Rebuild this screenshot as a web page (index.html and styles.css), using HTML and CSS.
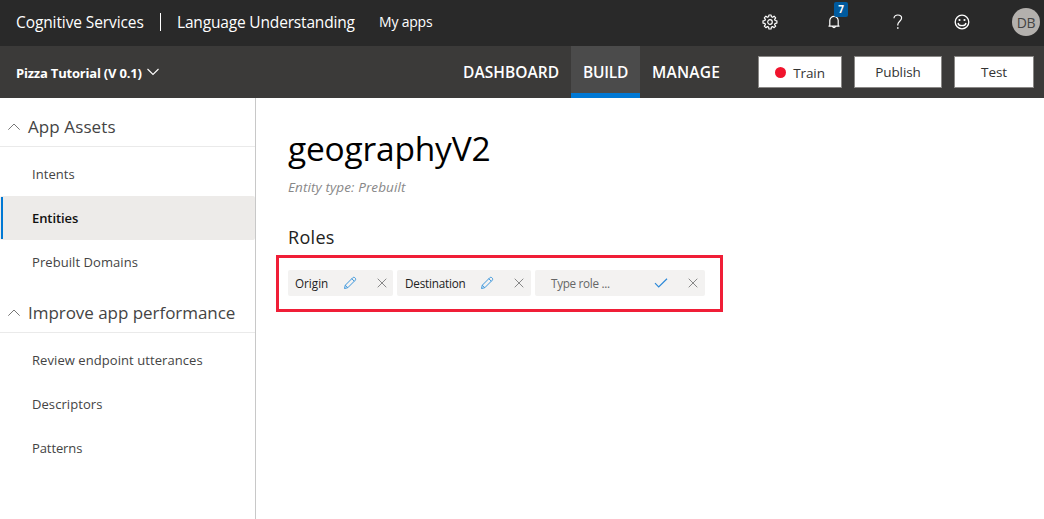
FILE: index.html
```html
<!DOCTYPE html>
<html lang="en">
<head>
<meta charset="utf-8">
<title>Language Understanding</title>
<link rel="stylesheet" href="styles.css">
</head>
<body>
<header class="topbar">
  <span class="brand">Cognitive Services</span>
  <span class="divider"></span>
  <span class="product">Language Understanding</span>
  <span class="my-apps">My apps</span>
  <div class="tools">
    <span class="tool"><svg width="16" height="16" viewBox="0 0 16 16" fill="none" stroke="#fff" stroke-width="1.2" stroke-linejoin="round"><path d="M6.900 1h2.200l.3 1.800 1.200.5 1.500-1.100 1.600 1.600-1.100 1.500.5 1.200 1.800.4v2.200l-1.800.3-.5 1.200 1.100 1.500-1.600 1.600-1.500-1.100-1.200.5L9.100 15H6.900l-.3-1.900-1.200-.5-1.500 1.100-1.600-1.600 1.100-1.500-.5-1.200L1 9.100V6.900l1.900-.4.5-1.200-1.100-1.500 1.600-1.600 1.500 1.100 1.200-.5z"/><circle cx="8" cy="8" r="2.300"/></svg></span>
    <span class="tool"><svg width="14" height="14" viewBox="0 0 14 14" fill="none" stroke="#fff" stroke-width="1.2"><path d="M2.800 10.700V5.600a4.200 4.200 0 0 1 8.400 0v5.100M1.500 11.200h11M5.600 11.600a1.500 1.500 0 0 0 2.800 0"/></svg><span class="badge">7</span></span>
    <span class="tool"><svg width="10" height="16" viewBox="0 0 10 16" fill="none" stroke="#fff" stroke-width="1.2"><path d="M1 4.200C1 2.200 2.700 1 4.800 1s3.800 1.200 3.800 3.100c0 2.900-3.800 3.400-3.800 6.500v.9"/><path d="M4.800 13.200v1.600" stroke-width="1.5"/></svg></span>
    <span class="tool"><svg width="16" height="16" viewBox="0 0 16 16" fill="none" stroke="#fff" stroke-width="1.3"><circle cx="8" cy="8" r="6.800"/><path d="M4 9c.8 3.600 7.200 3.600 8 0"/><circle cx="5.500" cy="6" r="1.100" fill="#fff" stroke="none"/><circle cx="10.500" cy="6" r="1.100" fill="#fff" stroke="none"/></svg></span>
    <span class="avatar">DB</span>
  </div>
</header>
<nav class="appbar">
  <span class="app-name">Pizza Tutorial (V 0.1)</span>
  <svg class="caret" width="12" height="8" viewBox="0 0 12 8" fill="none" stroke="#fff" stroke-width="1.1"><path d="M.5 1l5.500 5.500L11.500 1"/></svg>
  <div class="tabs">
    <a class="tab dashboard"><span>DASHBOARD</span></a>
    <a class="tab build active"><span>BUILD</span></a>
    <a class="tab manage"><span>MANAGE</span></a>
  </div>
  <div class="actions">
    <button class="btn train"><i class="dot"></i><span>Train</span></button>
    <button class="btn publish"><span>Publish</span></button>
    <button class="btn test"><span>Test</span></button>
  </div>
</nav>
<div class="body">
  <aside class="sidebar">
    <h2 class="group"><svg width="12" height="8" viewBox="0 0 12 8" fill="none" stroke="#777"><path d="M.3 6.700L6 1l5.700 5.700"/></svg><span class="assets">App Assets</span></h2>
    <ul class="links">
      <li><span>Intents</span></li>
      <li class="selected"><span>Entities</span></li>
      <li><span>Prebuilt Domains</span></li>
    </ul>
    <h2 class="group"><svg width="12" height="8" viewBox="0 0 12 8" fill="none" stroke="#777"><path d="M.3 6.700L6 1l5.700 5.700"/></svg><span class="improve">Improve app performance</span></h2>
    <ul class="links">
      <li><span>Review endpoint utterances</span></li>
      <li><span>Descriptors</span></li>
      <li><span class="patterns">Patterns</span></li>
    </ul>
  </aside>
  <main class="content">
    <h1 class="title"><span>geographyV2</span></h1>
    <p class="subtitle"><span>Entity type: Prebuilt</span></p>
    <h3 class="roles-heading"><span>Roles</span></h3>
    <div class="roles">
      <div class="chip origin"><span class="label">Origin</span><svg class="pencil" width="14" height="14" viewBox="0 0 14 14" fill="none" stroke="#3a96dd"><path d="M1.500 12.500l.8-3.300 7.400-7.400c1.500-1.500 4 .9 2.500 2.500L4.800 11.700zM8.800 2.700l2.500 2.500M2.300 9.200l2.500 2.500"/></svg><svg class="close" width="10" height="10" viewBox="0 0 10 10" stroke="#888"><path d="M.7.700l8.600 8.600M9.300.700L.7 9.300"/></svg></div>
      <div class="chip destination"><span class="label">Destination</span><svg class="pencil" width="14" height="14" viewBox="0 0 14 14" fill="none" stroke="#3a96dd"><path d="M1.500 12.500l.8-3.300 7.400-7.400c1.500-1.500 4 .9 2.500 2.500L4.800 11.700zM8.800 2.700l2.500 2.500M2.300 9.200l2.500 2.500"/></svg><svg class="close" width="10" height="10" viewBox="0 0 10 10" stroke="#888"><path d="M.7.700l8.600 8.600M9.300.700L.7 9.300"/></svg></div>
      <div class="chip entry"><span class="label">Type role ...</span><svg class="check" width="14" height="10" viewBox="0 0 14 10" fill="none" stroke="#2b88d8" stroke-width="1.2"><path d="M1 5.200l3.700 3.700L13 .7"/></svg><svg class="close" width="10" height="10" viewBox="0 0 10 10" stroke="#888"><path d="M.7.700l8.600 8.600M9.300.700L.7 9.300"/></svg></div>
    </div>
  </main>
</div>
</body>
</html>
```
FILE: styles.css
```css
* { box-sizing: border-box; }
body { margin: 0; width: 1044px; height: 519px; overflow: hidden; background: #fff; font-family: "Open Sans", "Noto Sans", sans-serif; color: #444; }
h1, h2, h3, p, ul { margin: 0; padding: 0; font-weight: 400; list-style: none; }
span { white-space: nowrap; }
svg { display: block; flex: none; }

.topbar { display: flex; align-items: center; height: 46px; padding: 0 4px 2px 16px; background: #292929; color: #fff; font-size: 15.5px; line-height: 44px; }
.brand { width: 144px; letter-spacing: -.1px; }
.divider { width: 1px; height: 18px; background: #fff; }
.product { margin-left: 16px; width: 202px; letter-spacing: -.17px; }
.my-apps { font-size: 14px; letter-spacing: -.2px; }
.tools { display: flex; align-items: center; margin-left: auto; height: 44px; }
.tool { position: relative; display: flex; align-items: center; justify-content: center; width: 64px; height: 44px; }
.badge { position: absolute; left: 32px; top: 2px; width: 14px; height: 15px; border-radius: 2px; background: #005a9e; font-size: 10px; font-weight: 700; line-height: 15px; text-align: center; }
.avatar { width: 28px; height: 28px; margin-left: 18px; border-radius: 50%; background: #b3b0ad; color: #444; font-size: 14px; letter-spacing: -.3px; line-height: 29px; text-align: center; }

.appbar { display: flex; align-items: center; height: 52px; padding: 0 10px 0 16px; background: #3b3a39; color: #fff; font-weight: 600; }
.app-name { width: 131px; padding-top: 1px; font-size: 13px; font-weight: 700; letter-spacing: -.2px; line-height: 20px; }
.tabs { display: flex; align-self: stretch; margin-left: auto; margin-right: 26px; font-size: 15.5px; line-height: 52px; }
.tab { height: 52px; padding: 0 12px; }
.tab.active { background: #4b4b4b; border-bottom: 5px solid #0078d4; }
.dashboard { width: 120px; letter-spacing: .05px; }
.build { width: 69px; letter-spacing: -.2px; }
.manage { width: 92px; letter-spacing: .2px; }
.actions { display: flex; gap: 12px; }
.btn { display: flex; align-items: center; justify-content: center; height: 32px; padding: 0; border: 1px solid #8a8886; background: #fff; color: #333; font: 500 13.5px "Open Sans", sans-serif; letter-spacing: -.1px; }
.train { width: 84px; gap: 7px; }
.train span { padding-top: 1px; }
.publish { width: 88px; }
.test { width: 80px; }
.dot { width: 11px; height: 11px; border-radius: 50%; background: #f0142d; }

.body { display: flex; height: 421px; }
.sidebar { width: 256px; border-right: 1px solid #c8c8c8; }
.group { display: flex; align-items: center; gap: 8px; height: 49px; padding: 9px 0 0 8px; border-bottom: 1px solid #eaeaea; font-size: 17px; }
.assets { letter-spacing: .1px; }
.improve { letter-spacing: -.04px; }
.links { padding-top: 5px; font-size: 13px; line-height: 44px; letter-spacing: .07px; }
.links li { height: 44px; padding-left: 32px; }
.links .selected { position: relative; border-radius: 2px; background: #edebe9; color: #111; font-weight: 600; letter-spacing: -.08px; }
.selected::before { content: ""; position: absolute; left: 1px; top: 1px; width: 2px; height: 42px; background: #0078d4; }
.patterns { letter-spacing: -.1px; }

.content { flex: 1; padding: 29px 0 0 20px; }
.title { padding-left: 12px; color: #000; font-size: 33.5px; line-height: 42px; letter-spacing: -.2px; }
.subtitle { padding: 8px 0 0 12px; color: #888; font-size: 13.5px; font-style: italic; line-height: 20px; letter-spacing: .1px; }
.roles-heading { padding: 28px 0 0 12px; color: #222; font-size: 18px; line-height: 24px; letter-spacing: .3px; }
.roles { display: flex; gap: 4px; width: 447px; height: 57px; margin-top: 6px; padding: 12px 9px; border: 3px solid #f01e37; }
.chip { display: flex; align-items: center; height: 26px; border-radius: 2px; background: #f3f2f1; color: #222; font-size: 11.7px; letter-spacing: -.2px; }
.origin { width: 105px; padding-left: 7px; }
.origin .label { width: 48px; letter-spacing: 0; }
.destination { width: 134px; padding-left: 8px; }
.destination .label { width: 75px; }
.entry { width: 170px; padding-left: 16px; color: #666; }
.entry .label { width: 103px; letter-spacing: -.3px; }
.pencil { margin-right: 20px; }
.check { margin-right: 20px; }
```
